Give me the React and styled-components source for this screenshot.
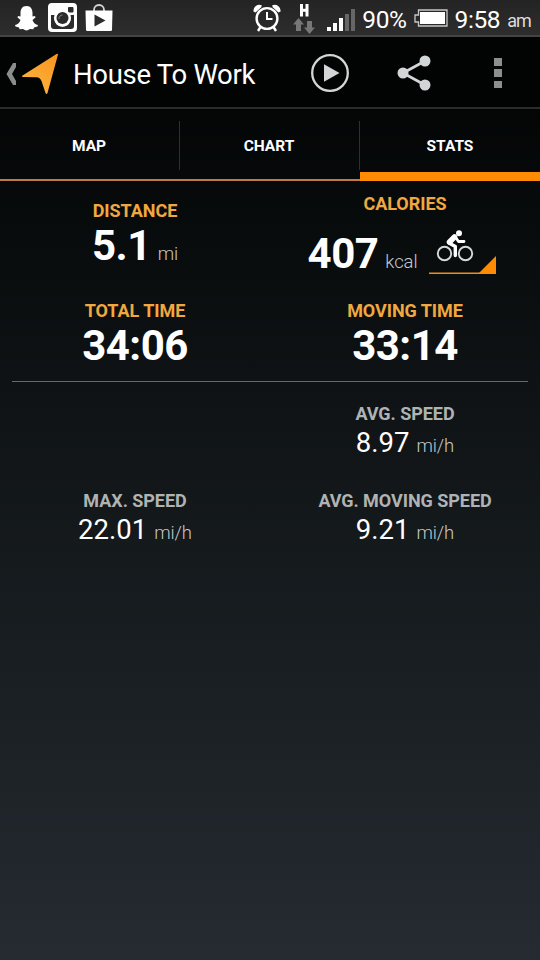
import React from 'react'
import styled, { createGlobalStyle } from 'styled-components';

const GlobalStyle = createGlobalStyle`
* {
    box-sizing: border-box;
}
body {
    margin: 0;
    background: #000;
    font-family: Roboto, "Liberation Sans", sans-serif;
}
svg {
    display: block;
    flex-shrink: 0;
}
`;

const Screen = styled.div`
width: 540px;
height: 960px;
display: flex;
flex-direction: column;
overflow: hidden;
color: #fff;
background: linear-gradient(#000 0px, #040606 110px, #080b0c 220px, #0f1315 400px, #151a1d 560px, #1e2328 780px, #262b32 960px);
`;

const StatusBar = styled.div`
height: 37px;
display: flex;
align-items: center;
justify-content: space-between;
padding: 0 9px 0 13px;
background: linear-gradient(#242424, #2d2d2d);
border-bottom: 2px solid #444;
`;

const StatusGroup = styled.div`
display: flex;
align-items: center;
gap: ${({ $gap }) => $gap}px;
`;

const StatusText = styled.span`
font-size: ${({ $small }) => ($small ? 18 : 24.5)}px;
letter-spacing: ${({ $small }) => ($small ? -0.9 : -0.4)}px;
color: ${({ $small }) => ($small ? '#ddd' : '#fff')};
line-height: 36px;
padding-top: ${({ $small }) => ($small ? 7 : 4)}px;
white-space: nowrap;
`;

const ActionBar = styled.div`
height: 72px;
display: flex;
align-items: center;
padding-left: 6px;
background: #020404;
border-bottom: 2px solid #2a2b2b;
`;

const UpButton = styled.div`
display: flex;
align-items: center;
gap: 4px;
padding-top: 3px;
`;

const Title = styled.h1`
margin: 0 0 0 14px;
padding-top: 5px;
width: 215px;
font-size: 27.5px;
font-weight: 400;
letter-spacing: -0.3px;
line-height: 36px;
white-space: nowrap;
`;

const Actions = styled.div`
display: flex;
align-items: center;
padding-top: 2px;
`;

const Action = styled.div`
width: 84px;
display: flex;
justify-content: center;
`;

const Tabs = styled.div`
height: 72px;
display: grid;
grid-template-columns: repeat(3, 180px);
`;

const Tab = styled.div`
display: flex;
align-items: center;
justify-content: center;
height: 72px;
padding: ${({ $active }) => ($active ? '10px 0 0' : '4px 2px 0 0')};
font-size: 15.5px;
font-weight: 700;
letter-spacing: 0;
border-bottom: ${({ $active }) => ($active ? '9px solid #ff8a04' : '2px solid #c27a45')};
background: ${({ $active }) =>
    $active ? 'none' : 'linear-gradient(#2d3030, #2d3030) right 0 top 12px / 1px 49px no-repeat'};
`;

const Summary = styled.div`
display: grid;
grid-template-columns: 270px 270px;
grid-template-rows: 110px 90px;
height: 200px;
`;

const Rule = styled.div`
height: 1px;
margin: 0 12px;
background: #66696a;
`;

const Speeds = styled.div`
display: grid;
grid-template-columns: 270px 270px;
grid-template-rows: 87px 87px;
padding-top: 21px;
`;

const Stat = styled.div`
display: flex;
flex-direction: column;
align-items: center;
padding-top: ${({ $top }) => $top || 0}px;
`;

const Label = styled.div`
font-size: 18px;
font-weight: 700;
line-height: 22px;
letter-spacing: -0.05px;
color: ${({ $muted }) => ($muted ? '#b0b3b3' : '#f0a83f')};
white-space: nowrap;
`;

const ValueRow = styled.div`
display: flex;
align-items: baseline;
height: ${({ $height }) => $height || 48}px;
line-height: ${({ $height }) => $height || 48}px;
`;

const BigValue = styled.span`
font-size: 42px;
font-weight: 700;
letter-spacing: -0.5px;
`;

const Value = styled.span`
font-size: 27.5px;
`;

const Unit = styled.span`
margin-left: 7px;
font-size: 18.5px;
font-weight: 300;
letter-spacing: -0.1px;
color: #c6c9cb;
`;

const CalorieRow = styled.div`
display: flex;
align-items: flex-start;
margin-top: 15px;
margin-left: -6px;
`;

const Spinner = styled.div`
margin: -1px 0 0 12px;
`;

const SnapIcon = () => (
    <svg width="27" height="26" viewBox="0 0 27 26">
        <path fill="#fff" d="M13.500 1C9 1 7.500 4.500 7.500 8v3.500L5 11l-.5 1.500 3 2.500c-1 3-3 4.500-5.500 5l.5 1.500 3.500 1 .7 1.800 3.300-.3c1.500.5 2 1.500 3.500 1.500s2-1 3.500-1.500l3.300.3.700-1.800 3.500-1L25 20c-2.500-.5-4.500-2-5.500-5l3-2.500L22 11l-2.500.5V8c0-3.500-1.500-7-6-7z" />
    </svg>
);

const InstagramIcon = () => (
    <svg width="29" height="29" viewBox="0 0 29 29">
        <rect width="29" height="29" rx="4" fill="#fff" />
        <path fill="#2b2b2b" d="M3 12h4.500a8 8 0 1 0 14 0H26v11a3 3 0 0 1-3 3H6a3 3 0 0 1-3-3z" />
        <rect x="20" y="4" width="5.500" height="5.500" rx="1" fill="#2b2b2b" />
        <circle cx="14.500" cy="15" r="8.500" fill="#fff" />
        <circle cx="14.500" cy="15" r="6" fill="#2b2b2b" />
        <path d="M11 16a3.500 3.500 0 0 1 3.500-4" fill="none" stroke="#888" strokeWidth="1" />
    </svg>
);

const PlayStoreIcon = () => (
    <svg width="28" height="28" viewBox="0 0 28 28">
        <path d="M9 8V6a5 5 0 0 1 10 0v2" fill="none" stroke="#d5d5d5" strokeWidth="1.800" />
        <path fill="#fff" d="M0.500 6.500h27L27 26q-.1 1-1.300 1H2.300q-1.200 0-1.300-1z" />
        <path fill="#2b2b2b" d="M9.500 10.500l11 6-11 6z" />
    </svg>
);

const AlarmIcon = () => (
    <svg width="28" height="28" viewBox="0 0 28 28" fill="none" stroke="#fff">
        <circle cx="14" cy="14.500" r="10.400" strokeWidth="2.400" />
        <path d="M14 8v7h5.500" strokeWidth="2" />
        <path d="M7.500 23l-2.500 4M20.500 23l2.500 4" strokeWidth="2.400" />
        <path d="M0.500 7.500A6 6 0 0 1 8.800 1.200L8.300 3.300 2.500 8.500zM27.500 7.500A6 6 0 0 0 19.200 1.200L19.700 3.300l5.800 5.200z" fill="#fff" stroke="none" />
    </svg>
);

const DataIcon = () => (
    <svg width="22" height="32" viewBox="0 0 22 32">
        <path d="M8.500 2v12.500M14 2v12.500M8 8.200h6" stroke="#fff" strokeWidth="3" fill="none" />
        <path fill="#777" d="M5.500 16l5.500 6.500H8V29H3v-6.500H0zM16.500 32L11 25.500h3V19h5v6.500h3z" />
    </svg>
);

const SignalIcon = () => (
    <svg width="28" height="28" viewBox="0 0 28 28">
        <path fill="#fff" d="M0 23h4v4H0zM6 19h4v8H6zM12 14h4v13h-4z" />
        <path fill="#666" d="M18 10h4v17h-4zM24 5h4v22h-4z" />
    </svg>
);

const BatteryIcon = () => (
    <svg width="34" height="18" viewBox="0 0 34 18">
        <path d="M4.500 1h28.500v16H4.500v-4H1V6h3.500z" fill="none" stroke="#c8c8c8" strokeWidth="1.300" />
        <rect x="6" y="3" width="25" height="12" fill="#fff" />
    </svg>
);

const BackIcon = () => (
    <svg width="11" height="22" viewBox="0 0 11 22">
        <path d="M10 0v4L6 11l4 7v4H7L0.500 11 7 0z" fill="#8b8d8d" />
    </svg>
);

const ArrowIcon = () => (
    <svg width="38" height="42" viewBox="0 0 38 42">
        <defs>
            <linearGradient id="arrow" x1="1" y1="0" x2="0.400" y2="1">
                <stop offset="0" stopColor="#f7941e" />
                <stop offset="1" stopColor="#fdb33c" />
            </linearGradient>
        </defs>
        <path d="M37 1.500L26.500 40q-1 2-2 0L20.500 28q-1.500-3.500-5-3.800L2 24q-2-.5 0-1.800L35.500 1q1.500-.8 1.500.5z" fill="url(#arrow)" />
    </svg>
);

const PlayIcon = () => (
    <svg width="40" height="40" viewBox="0 0 40 40">
        <circle cx="20" cy="20" r="17.800" fill="none" stroke="#d3d6d6" strokeWidth="2.300" />
        <path d="M14 11.300v17.400L29.500 20z" fill="#d3d6d6" />
    </svg>
);

const ShareIcon = () => (
    <svg width="34" height="36" viewBox="0 0 34 36">
        <path d="M28 6L6 18l22 12" fill="none" stroke="#d3d6d6" strokeWidth="2.800" />
        <circle cx="28" cy="6" r="5.500" fill="#d3d6d6" />
        <circle cx="6" cy="18" r="5.500" fill="#d3d6d6" />
        <circle cx="28" cy="30" r="5.500" fill="#d3d6d6" />
    </svg>
);

const MoreIcon = () => (
    <svg width="8" height="30" viewBox="0 0 8 30">
        <path d="M0 0h8v8H0zM0 11h8v8H0zM0 23h8v7H0z" fill="#8d8f8f" />
    </svg>
);

const CyclingSpinner = () => (
    <svg width="67" height="46" viewBox="0 0 67 46">
        <g fill="none" stroke="#d7d9da" strokeWidth="1.900">
            <circle cx="15.500" cy="24.500" r="6.700" />
            <circle cx="36.500" cy="24.500" r="6.700" />
        </g>
        <circle cx="30" cy="4.300" r="3" fill="#fff" />
        <path d="M20.500 13l5-5" stroke="#fff" strokeWidth="5.500" strokeLinecap="round" />
        <path d="M26 7.500l3.500 5h5.500" stroke="#fff" strokeWidth="2.800" strokeLinecap="round" strokeLinejoin="round" fill="none" />
        <path d="M20 14l6.300 3.500v9" stroke="#fff" strokeWidth="3.400" strokeLinecap="round" strokeLinejoin="round" fill="none" />
        <path d="M0 44.300h67" stroke="#f28b1c" strokeWidth="1.500" />
        <path d="M67 27V45H49z" fill="#ff8a04" />
    </svg>
);

const App = () => {
    return (
        <>
            <GlobalStyle />
            <Screen>
                <StatusBar>
                    <StatusGroup $gap={8}>
                        <SnapIcon />
                        <InstagramIcon />
                        <PlayStoreIcon />
                    </StatusGroup>
                    <StatusGroup $gap={7}>
                        <StatusGroup $gap={12}>
                            <AlarmIcon />
                            <DataIcon />
                            <SignalIcon />
                        </StatusGroup>
                        <StatusText>90%</StatusText>
                        <BatteryIcon />
                        <StatusText>9:58</StatusText>
                        <StatusText $small>am</StatusText>
                    </StatusGroup>
                </StatusBar>
                <ActionBar>
                    <UpButton>
                        <BackIcon />
                        <ArrowIcon />
                    </UpButton>
                    <Title>House To Work</Title>
                    <Actions>
                        <Action><PlayIcon /></Action>
                        <Action><ShareIcon /></Action>
                        <Action><MoreIcon /></Action>
                    </Actions>
                </ActionBar>
                <Tabs>
                    <Tab>MAP</Tab>
                    <Tab>CHART</Tab>
                    <Tab $active>STATS</Tab>
                </Tabs>
                <Summary>
                    <Stat $top={19}>
                        <Label>DISTANCE</Label>
                        <ValueRow>
                            <BigValue>5.1</BigValue>
                            <Unit>mi</Unit>
                        </ValueRow>
                    </Stat>
                    <Stat $top={12}>
                        <Label>CALORIES</Label>
                        <CalorieRow>
                            <ValueRow>
                                <BigValue>407</BigValue>
                                <Unit>kcal</Unit>
                            </ValueRow>
                            <Spinner>
                                <CyclingSpinner />
                            </Spinner>
                        </CalorieRow>
                    </Stat>
                    <Stat $top={9}>
                        <Label>TOTAL TIME</Label>
                        <ValueRow>
                            <BigValue>34:06</BigValue>
                        </ValueRow>
                    </Stat>
                    <Stat $top={9}>
                        <Label>MOVING TIME</Label>
                        <ValueRow>
                            <BigValue>33:14</BigValue>
                        </ValueRow>
                    </Stat>
                </Summary>
                <Rule />
                <Speeds>
                    <Stat />
                    <Stat>
                        <Label $muted>AVG. SPEED</Label>
                        <ValueRow $height={36}>
                            <Value>8.97</Value>
                            <Unit>mi/h</Unit>
                        </ValueRow>
                    </Stat>
                    <Stat>
                        <Label $muted>MAX. SPEED</Label>
                        <ValueRow $height={36}>
                            <Value>22.01</Value>
                            <Unit>mi/h</Unit>
                        </ValueRow>
                    </Stat>
                    <Stat>
                        <Label $muted>AVG. MOVING SPEED</Label>
                        <ValueRow $height={36}>
                            <Value>9.21</Value>
                            <Unit>mi/h</Unit>
                        </ValueRow>
                    </Stat>
                </Speeds>
            </Screen>
        </>
    )
};

export default App;
